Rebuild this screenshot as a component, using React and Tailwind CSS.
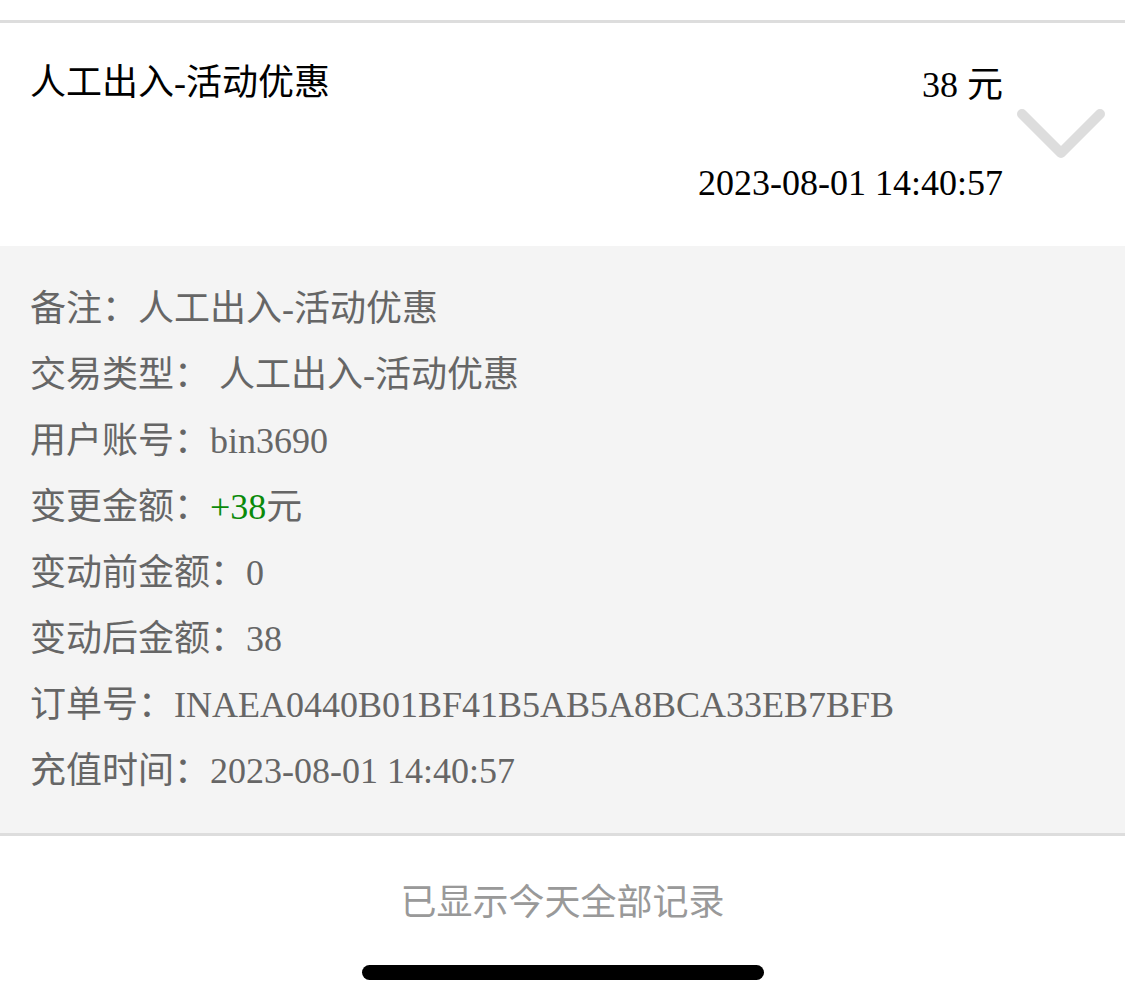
import React from "react";

const rows = [
  { label: "备注：", value: "人工出入-活动优惠" },
  { label: "交易类型： ", value: "人工出入-活动优惠" },
  { label: "用户账号：", value: "bin3690" },
  { label: "变更金额：", value: "+38", suffix: "元", green: true },
  { label: "变动前金额：", value: "0" },
  { label: "变动后金额：", value: "38" },
  { label: "订单号：", value: "INAEA0440B01BF41B5AB5A8BCA33EB7BFB" },
  { label: "充值时间：", value: "2023-08-01 14:40:57" },
];

const font = {
  fontFamily: '"Liberation Serif", "Noto Sans CJK SC", serif',
};

const App = () => {
  return (
    <div
      className="w-[1125px] h-[1003px] bg-white overflow-hidden"
      style={font}
    >
      <div className="h-[20px]" />
      <div className="border-t-[3px] border-[#dddddd]" />

      <div className="relative bg-white pl-[30px] pr-[122px] pt-[33px] pb-[38px]">
        <div className="flex justify-between items-center text-[36px] leading-[50px] text-black">
          <span>人工出入-活动优惠</span>
          <span className="mt-[4px]">38 元</span>
        </div>
        <div className="mt-[48px] text-right text-[36px] leading-[50px] text-black">
          2023-08-01 14:40:57
        </div>
        <svg
          className="absolute left-[1012px] top-[81px]"
          width="98"
          height="60"
          viewBox="0 0 98 60"
          fill="none"
        >
          <polyline
            points="10,10 49,49 88,10"
            stroke="#dddddd"
            strokeWidth="10"
            strokeLinecap="round"
            strokeLinejoin="round"
          />
        </svg>
      </div>

      <div className="bg-[#f4f4f4] px-[30px] pt-[30px] pb-[29px] border-b-[3px] border-[#dddddd]">
        {rows.map((row) => (
          <div
            key={row.label}
            className="text-[36px] leading-[66px] text-[#666666] whitespace-pre"
          >
            {row.label}
            <span className={row.green ? "text-[#0a8a0a]" : ""}>
              {row.value}
            </span>
            {row.suffix}
          </div>
        ))}
      </div>

      <div className="pt-[42px] text-center text-[36px] leading-[50px] text-[#999999]">
        已显示今天全部记录
      </div>
      <div className="flex justify-center mt-[37px]">
        <div className="w-[402px] h-[15px] rounded-full bg-black" />
      </div>
    </div>
  );
};

export default App;
